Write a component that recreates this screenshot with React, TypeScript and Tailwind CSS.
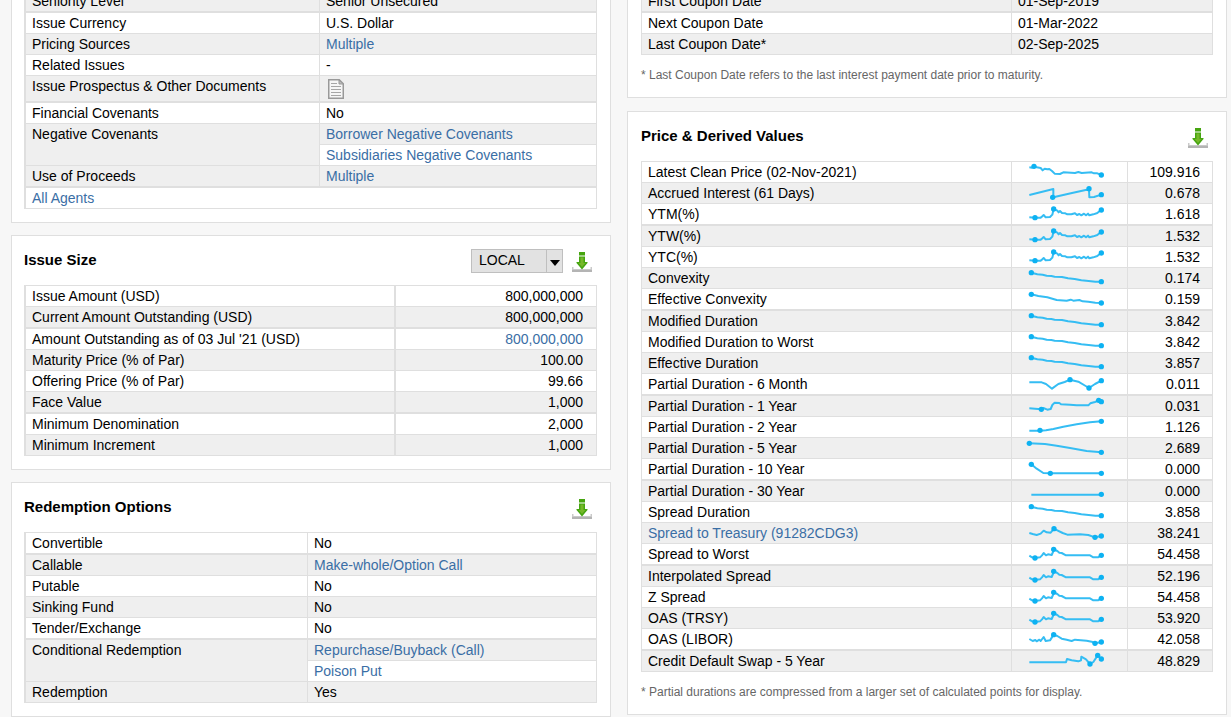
import type { ReactNode } from "react";

type Cell = { text: string; link?: boolean };

const plain = (text: string): Cell => ({ text });
const link = (text: string): Cell => ({ text, link: true });

const cellBase = "border-r border-b border-[#dfdfdf] px-1.5 py-0 align-top leading-5 font-normal";
const striped = "[&>tbody>tr:nth-child(even)>*]:bg-[#efefef]";
const stripedOdd = "[&>tbody>tr:nth-child(odd)>*]:bg-[#efefef]";

// every fourth rule is drawn heavier
const heavyFirst = "[&>tbody>tr:nth-child(4n+1)>*:not([rowspan])]:border-b-2";
const heavySecond = "[&>tbody>tr:nth-child(4n+2)>*]:border-b-2";
const heavyThird = "[&>tbody>tr:nth-child(4n+3)>*]:border-b-2";

const issueSize = [
  { label: "Issue Amount (USD)", value: plain("800,000,000") },
  { label: "Current Amount Outstanding (USD)", value: plain("800,000,000") },
  { label: "Amount Outstanding as of 03 Jul '21 (USD)", value: link("800,000,000") },
  { label: "Maturity Price (% of Par)", value: plain("100.00") },
  { label: "Offering Price (% of Par)", value: plain("99.66") },
  { label: "Face Value", value: plain("1,000") },
  { label: "Minimum Denomination", value: plain("2,000") },
  { label: "Minimum Increment", value: plain("1,000") },
];

const redemption = [
  { label: "Convertible", values: [plain("No")] },
  { label: "Callable", values: [link("Make-whole/Option Call")] },
  { label: "Putable", values: [plain("No")] },
  { label: "Sinking Fund", values: [plain("No")] },
  { label: "Tender/Exchange", values: [plain("No")] },
  { label: "Conditional Redemption", values: [link("Repurchase/Buyback (Call)"), link("Poison Put")] },
  { label: "Redemption", values: [plain("Yes")] },
];

const coupons = [
  ["First Coupon Date", "01-Sep-2019"],
  ["Next Coupon Date", "01-Mar-2022"],
  ["Last Coupon Date*", "02-Sep-2025"],
];

type Trend = { line: string; dots: [number, number][] };

const yieldTrend: Trend = {
  line: "52,40 69,41 86,41 90,38 95,33 101,40 114,39 121,32 125,15 136,20 140,25 144,21 150,27 160,28 166,31 178,31 189,28 195,33 202,30 208,34 216,29 222,34 228,29 232,34 244,31 256,27 262,22 268,18",
  dots: [[69, 41], [125, 15], [268, 18]],
};
const decline: Trend = {
  line: "58,14 76,19 92,20 104,23 118,24 128,26 150,27 168,31 188,33 208,37 230,39 250,41 268,41",
  dots: [[58, 14], [268, 41]],
};
const spreadTrend: Trend = {
  line: "52,35 60,40 69,42 84,40 90,34 95,27 102,34 108,31 119,33 123,24 125,16 136,21 142,26 149,27 162,34 234,34 244,40 258,40 268,34",
  dots: [[69, 42], [125, 16], [268, 34]],
};

const prices: { label: string; value: string; trend: Trend; link?: boolean }[] = [
  {
    label: "Latest Clean Price (02-Nov-2021)",
    value: "109.916",
    trend: {
      line: "52,16 60,17 66,13 74,16 86,18 92,25 98,20 106,22 112,21 120,27 128,35 144,36 154,31 189,33 199,30 209,33 239,31 246,34 256,34 268,39",
      dots: [[66, 13], [268, 39]],
    },
  },
  {
    label: "Accrued Interest (61 Days)",
    value: "0.678",
    trend: {
      line: "52,36 88,27 124,18 124,43 180,30 231,19 232,43 246,42 268,35",
      dots: [[122, 43], [231, 17], [268, 35]],
    },
  },
  { label: "YTM(%)", value: "1.618", trend: yieldTrend },
  { label: "YTW(%)", value: "1.532", trend: yieldTrend },
  { label: "YTC(%)", value: "1.532", trend: yieldTrend },
  { label: "Convexity", value: "0.174", trend: decline },
  {
    label: "Effective Convexity",
    value: "0.159",
    trend: {
      line: "58,16 79,21 106,25 134,33 164,35 176,32 184,35 202,33 212,37 229,38 250,41 268,42",
      dots: [[58, 16], [268, 42]],
    },
  },
  { label: "Modified Duration", value: "3.842", trend: decline },
  { label: "Modified Duration to Worst", value: "3.842", trend: decline },
  { label: "Effective Duration", value: "3.857", trend: decline },
  {
    label: "Partial Duration - 6 Month",
    value: "0.011",
    trend: {
      line: "52,25 89,25 102,30 120,44 139,30 158,24 174,17 199,23 216,33 231,42 249,30 268,20",
      dots: [[174, 17], [231, 42], [268, 20]],
    },
  },
  {
    label: "Partial Duration - 1 Year",
    value: "0.031",
    trend: {
      line: "52,37 69,38 88,40 94,36 106,41 116,39 121,27 128,20 142,21 147,25 174,26 194,28 229,28 235,22 249,18 260,13 268,17",
      dots: [[88, 40], [260, 13], [268, 17]],
    },
  },
  {
    label: "Partial Duration - 2 Year",
    value: "1.126",
    trend: {
      line: "52,41 84,41 102,40 124,36 154,29 194,22 234,16 268,13",
      dots: [[84, 40], [268, 13]],
    },
  },
  {
    label: "Partial Duration - 5 Year",
    value: "2.689",
    trend: {
      line: "52,16 99,18 134,23 174,30 224,39 268,43",
      dots: [[52, 16], [268, 43]],
    },
  },
  {
    label: "Partial Duration - 10 Year",
    value: "0.000",
    trend: { line: "58,16 74,29 94,42 115,43 268,43", dots: [[58, 16], [115, 43], [268, 43]] },
  },
  {
    label: "Partial Duration - 30 Year",
    value: "0.000",
    trend: { line: "58,41 268,41", dots: [[268, 40]] },
  },
  { label: "Spread Duration", value: "3.858", trend: decline },
  {
    label: "Spread to Treasury (91282CDG3)",
    value: "38.241",
    link: true,
    trend: {
      line: "52,30 62,33 74,36 86,32 95,23 104,28 116,29 126,17 136,22 152,30 166,35 204,34 229,36 249,43 268,39",
      dots: [[126, 17], [249, 43], [268, 39]],
    },
  },
  { label: "Spread to Worst", value: "54.458", trend: spreadTrend },
  { label: "Interpolated Spread", value: "52.196", trend: spreadTrend },
  { label: "Z Spread", value: "54.458", trend: spreadTrend },
  { label: "OAS (TRSY)", value: "53.920", trend: spreadTrend },
  {
    label: "OAS (LIBOR)",
    value: "42.058",
    trend: {
      line: "52,30 62,36 70,33 74,37 82,32 86,36 95,24 101,36 114,34 125,17 136,21 149,29 164,32 179,36 189,32 224,35 239,38 249,43 268,39",
      dots: [[125, 17], [249, 43], [268, 39]],
    },
  },
  {
    label: "Credit Default Swap - 5 Year",
    value: "48.829",
    trend: {
      line: "52,34 162,34 165,24 179,28 199,31 207,28 208,17 222,25 234,39 244,33 257,13 268,24",
      dots: [[234, 39], [257, 13], [268, 24]],
    },
  },
];

function Content({ cell }: { cell: Cell }) {
  if (!cell.link) return <>{cell.text}</>;
  return (
    <a href="#" className="text-[#3a6ea5]">
      {cell.text}
    </a>
  );
}

function Sparkline({ trend }: { trend: Trend }) {
  return (
    <svg viewBox="0 0 345 60" className="mx-auto block h-5 w-[115px]" aria-hidden="true">
      <polyline points={trend.line} fill="none" stroke="#35bdf3" strokeWidth="6" strokeLinejoin="round" />
      {trend.dots.map(([x, y]) => (
        <circle key={x} cx={x} cy={y} r="8" fill="#0db2f2" />
      ))}
    </svg>
  );
}

function DocumentIcon() {
  return (
    <svg viewBox="0 0 16 20" className="h-5 w-4" aria-hidden="true">
      <path d="M.75.750h10.500l4 4v14.500H.75z" fill="#f6f6f6" stroke="#999" strokeWidth="1.5" />
      <path d="M11 1v4h4.500z" fill="#bbb" stroke="#999" />
      <path d="M3 4.500h6M3 7.500h10M3 10.500h10M3 13.500h10M3 16.500h10" stroke="#a6a6a6" />
    </svg>
  );
}

function DownloadButton({ label }: { label: string }) {
  return (
    <button type="button" aria-label={label} className="mt-4 mr-[5px] block">
      <svg viewBox="0 0 20 20" className="h-5 w-5" aria-hidden="true">
        <path d="M0 15h1.500v2h17v-2H20v5H0z" fill="#c9c9c9" />
        <path d="M0 18h20v2H0z" fill="#b4b4b4" />
        <path d="M7 0h6v3.500H7zM7 4.500h6V10h2.500v1L10 17.500 4.500 11v-1H7z" fill="#46a510" />
        <path d="M8.500 5.500h3V11h2L10 15l-3.500-4h2z" fill="#76b82a" />
      </svg>
    </button>
  );
}

function CardHeader({ title, children }: { title: string; children?: ReactNode }) {
  return (
    <header className="flex h-[49px] items-start gap-[9px]">
      <h2 className="mr-auto pt-3.5 text-[15px] leading-5 font-bold">{title}</h2>
      {children}
      <DownloadButton label={`Download ${title}`} />
    </header>
  );
}

function Footnote({ children }: { children: ReactNode }) {
  return <p className="pt-3 text-xs leading-[17px] text-[#666]">{children}</p>;
}

function GeneralTable() {
  return (
    <table className={`w-full table-fixed border-separate border-spacing-0 border-l-2 border-[#dfdfdf] ${stripedOdd} ${heavyFirst}`}>
      <colgroup>
        <col className="w-[294px]" />
        <col />
      </colgroup>
      <tbody className="text-left">
        <tr>
          <th scope="row" className={cellBase}>Seniority Level</th>
          <td className={cellBase}>Senior Unsecured</td>
        </tr>
        <tr>
          <th scope="row" className={cellBase}>Issue Currency</th>
          <td className={cellBase}>U.S. Dollar</td>
        </tr>
        <tr>
          <th scope="row" className={cellBase}>Pricing Sources</th>
          <td className={cellBase}><Content cell={link("Multiple")} /></td>
        </tr>
        <tr>
          <th scope="row" className={cellBase}>Related Issues</th>
          <td className={cellBase}>-</td>
        </tr>
        <tr>
          <th scope="row" className={cellBase}>Issue Prospectus &amp; Other Documents</th>
          <td className={cellBase}>
            <a href="#" aria-label="Issue documents" className="flex h-[25px] items-center pl-0.5">
              <DocumentIcon />
            </a>
          </td>
        </tr>
        <tr>
          <th scope="row" className={cellBase}>Financial Covenants</th>
          <td className={cellBase}>No</td>
        </tr>
        <tr>
          <th scope="row" rowSpan={2} className={cellBase}>Negative Covenants</th>
          <td className={cellBase}><Content cell={link("Borrower Negative Covenants")} /></td>
        </tr>
        <tr>
          <td className={cellBase}><Content cell={link("Subsidiaries Negative Covenants")} /></td>
        </tr>
        <tr>
          <th scope="row" className={cellBase}>Use of Proceeds</th>
          <td className={cellBase}><Content cell={link("Multiple")} /></td>
        </tr>
        <tr>
          <td colSpan={2} className={cellBase}><Content cell={link("All Agents")} /></td>
        </tr>
      </tbody>
    </table>
  );
}

function IssueSizeTable() {
  return (
    <table className={`w-full table-fixed border-separate border-spacing-0 border-t border-l-2 border-[#dfdfdf] ${striped} ${heavySecond}`}>
      <colgroup>
        <col className="w-[370px]" />
        <col />
      </colgroup>
      <tbody>
        {issueSize.map((row) => (
          <tr key={row.label}>
            <th scope="row" className={`${cellBase} border-r-2 text-left`}>{row.label}</th>
            <td className={`${cellBase} text-right`}>
              <span className="pr-[7px]">
                <Content cell={row.value} />
              </span>
            </td>
          </tr>
        ))}
      </tbody>
    </table>
  );
}

function RedemptionTable() {
  return (
    <table className={`w-full table-fixed border-separate border-spacing-0 border-t border-l-2 border-[#dfdfdf] ${striped} ${heavyFirst}`}>
      <colgroup>
        <col className="w-[282px]" />
        <col />
      </colgroup>
      <tbody className="text-left">
        {redemption.flatMap((row) =>
          row.values.map((value, i) => (
            <tr key={value.text + row.label}>
              {i === 0 && (
                <th scope="row" rowSpan={row.values.length > 1 ? row.values.length : undefined} className={cellBase}>
                  {row.label}
                </th>
              )}
              <td className={cellBase}>
                <Content cell={value} />
              </td>
            </tr>
          )),
        )}
      </tbody>
    </table>
  );
}

function CouponTable() {
  return (
    <table className={`w-full table-fixed border-separate border-spacing-0 border-l border-[#dfdfdf] ${stripedOdd} ${heavyFirst}`}>
      <colgroup>
        <col />
        <col className="w-[201px]" />
      </colgroup>
      <tbody className="text-left">
        {coupons.map(([label, date]) => (
          <tr key={label}>
            <th scope="row" className={cellBase}>{label}</th>
            <td className={cellBase}>{date}</td>
          </tr>
        ))}
      </tbody>
    </table>
  );
}

function PriceTable() {
  return (
    <table className={`w-full table-fixed border-separate border-spacing-0 border-t border-l border-[#dfdfdf] ${striped} ${heavyThird}`}>
      <colgroup>
        <col />
        <col className="w-[116px]" />
        <col className="w-[85px]" />
      </colgroup>
      <tbody>
        {prices.map((row) => (
          <tr key={row.label}>
            <th scope="row" className={`${cellBase} text-left`}>
              <Content cell={{ text: row.label, link: row.link }} />
            </th>
            <td className="border-r border-b border-[#dfdfdf] p-0 align-top">
              <Sparkline trend={row.trend} />
            </td>
            <td className={`${cellBase} text-right`}>
              <span className="pr-1.5">{row.value}</span>
            </td>
          </tr>
        ))}
      </tbody>
    </table>
  );
}

export default function App() {
  return (
    <div className="min-h-screen overflow-hidden bg-[#f7f7f7] font-['Liberation_Sans',Arial,sans-serif] text-sm text-black">
      <main className="-mt-[9px] grid grid-cols-2 items-start gap-4 pr-1 pl-[11px]">
        <div className="flex flex-col gap-3">
          <section className="border border-t-0 border-[#dfdfdf] bg-white pr-[13px] pb-[13px] pl-3">
            <GeneralTable />
          </section>

          <section className="border border-[#dfdfdf] bg-white pr-[13px] pb-[13px] pl-3">
            <CardHeader title="Issue Size">
              <div className="relative mt-[13px] h-6 w-[92px]">
                <select
                  aria-label="Currency"
                  className="h-full w-full appearance-none border border-[#bfbfbf] bg-[#e2e2e2] pb-0.5 pl-[7px] leading-5"
                >
                  <option>LOCAL</option>
                </select>
                <span className="pointer-events-none absolute inset-y-0 right-0 flex w-[17px] items-center justify-center border-l border-[#bfbfbf] pt-1">
                  <svg viewBox="0 0 10 6" className="h-1.5 w-2.5" aria-hidden="true">
                    <path d="M0 0h10L5 6z" />
                  </svg>
                </span>
              </div>
            </CardHeader>
            <IssueSizeTable />
          </section>

          <section className="border border-[#dfdfdf] bg-white pr-[13px] pb-[13px] pl-3">
            <CardHeader title="Redemption Options" />
            <RedemptionTable />
          </section>
        </div>

        <div className="flex flex-col gap-[13px]">
          <section className="border border-t-0 border-[#dfdfdf] bg-white px-[13px] pb-[13px]">
            <CouponTable />
            <Footnote>* Last Coupon Date refers to the last interest payment date prior to maturity.</Footnote>
          </section>

          <section className="border border-[#dfdfdf] bg-white px-[13px] pb-[13px]">
            <CardHeader title="Price & Derived Values" />
            <PriceTable />
            <Footnote>* Partial durations are compressed from a larger set of calculated points for display.</Footnote>
          </section>
        </div>
      </main>
    </div>
  );
}
